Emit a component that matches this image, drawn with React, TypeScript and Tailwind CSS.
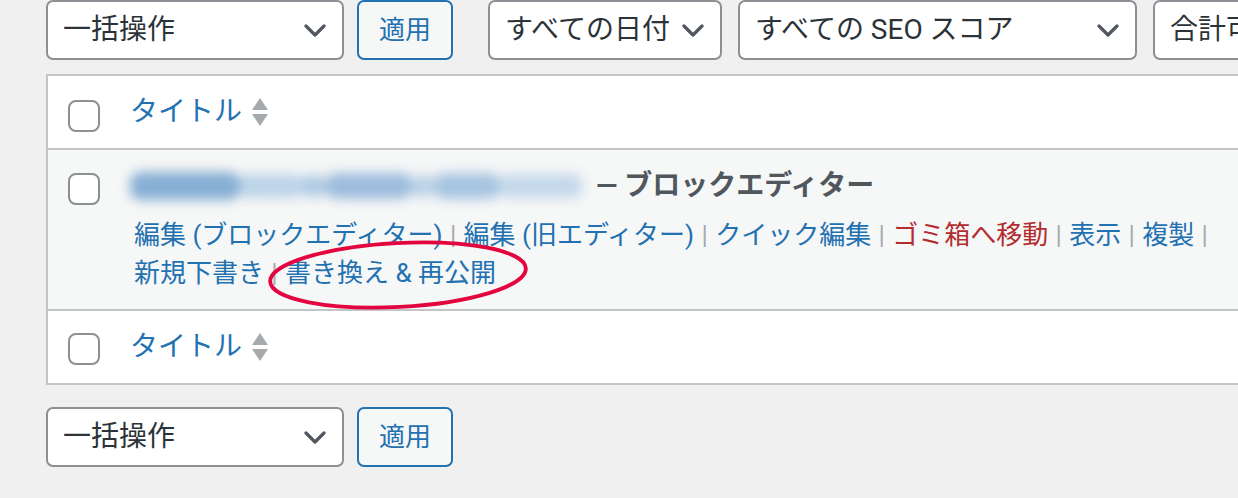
import React from "react";

const font = "font-['Roboto','Noto_Sans_CJK_JP',sans-serif]";

const Chevron = () => (
  <svg width="22" height="13" viewBox="0 0 22 13" className="shrink-0">
    <polyline
      points="2,2 11,11 20,2"
      fill="none"
      stroke="#50575e"
      strokeWidth="3.2"
      strokeLinecap="round"
      strokeLinejoin="round"
    />
  </svg>
);

const Select = ({ label, width }: { label: string; width: string }) => (
  <div
    className={`${width} h-[60px] shrink-0 flex items-center justify-between pl-[15px] pr-[16px] bg-white border-2 border-[#8c8f94] rounded-[7px] text-[28px] text-[#2c3338] whitespace-nowrap overflow-hidden`}
  >
    <span>{label}</span>
    <Chevron />
  </div>
);

const ApplyButton = () => (
  <div className="w-[96px] h-[60px] shrink-0 flex items-center justify-center bg-[#f6f7f7] border-2 border-[#2271b1] rounded-[7px] text-[26px] text-[#2271b1]">
    適用
  </div>
);

const Checkbox = ({ top }: { top: string }) => (
  <div
    className={`${top} ml-[20px] w-[32px] h-[32px] shrink-0 bg-white border-2 border-[#8c8f94] rounded-[8px]`}
  />
);

const SortArrows = () => (
  <svg width="18" height="30" viewBox="0 0 18 30" className="ml-[9px]">
    <polygon points="9,1 17,13 1,13" fill="#a7aaad" />
    <polygon points="1,17 17,17 9,29" fill="#a7aaad" />
  </svg>
);

const TitleHeader = ({ top }: { top: string }) => (
  <div className="h-[72px] bg-white flex items-start">
    <Checkbox top={top} />
    <div className="ml-[30px] mt-[16px] h-[40px] flex items-center text-[28px] text-[#2271b1]">
      <span>タイトル</span>
      <SortArrows />
    </div>
  </div>
);

const Sep = () => (
  <span className="inline-block w-[21px] text-center text-[#a7aaad]">|</span>
);

const Action = ({ children, red }: { children: React.ReactNode; red?: boolean }) => (
  <span className={red ? "text-[#b32d2e]" : "text-[#2271b1]"}>{children}</span>
);

// the post title is blurred out in the screenshot
const BlurredTitle = () => (
  <div className="flex items-center h-[36px] w-[452px] blur-[6px]">
    <div className="w-[110px] h-[28px] rounded-[10px] bg-[#86aed4]" />
    <div className="w-[60px] h-[24px] rounded-[8px] bg-[#bcd3e8]" />
    <div className="w-[26px] h-[22px] rounded-[8px] bg-[#b0cae3]" />
    <div className="w-[86px] h-[26px] rounded-[10px] bg-[#9cbcdc]" />
    <div className="w-[22px] h-[22px] rounded-[8px] bg-[#bad1e7]" />
    <div className="w-[66px] h-[26px] rounded-[10px] bg-[#a6c4e0]" />
    <div className="w-[82px] h-[24px] rounded-[8px] bg-[#c4d8eb]" />
  </div>
);

const PostRow = () => (
  <div className="relative h-[159px] bg-[#f6f7f7] flex items-start">
    <Checkbox top="mt-[23px]" />
    <div className="ml-[30px] pt-[16px] flex flex-col">
      <div className="h-[40px] flex items-center text-[28px]">
        <BlurredTitle />
        <span className="ml-[14px] font-bold text-[#50575e]">— ブロックエディター</span>
      </div>
      <div className="mt-[10px] ml-[4px] h-[38px] flex items-center text-[26px] whitespace-nowrap">
        <Action>編集 (ブロックエディター)</Action>
        <Sep />
        <Action>編集 (旧エディター)</Action>
        <Sep />
        <Action>クイック編集</Action>
        <Sep />
        <Action red>ゴミ箱へ移動</Action>
        <Sep />
        <Action>表示</Action>
        <Sep />
        <Action>複製</Action>
        <Sep />
      </div>
      <div className="ml-[4px] h-[38px] flex items-center text-[26px] whitespace-nowrap">
        <Action>新規下書き</Action>
        <Sep />
        <Action>書き換え &amp; 再公開</Action>
      </div>
    </div>
    <svg
      className="absolute left-[217px] top-[88px] pointer-events-none"
      width="266"
      height="74"
      viewBox="0 0 266 74"
    >
      <ellipse
        cx="133"
        cy="37"
        rx="128"
        ry="32"
        transform="rotate(-3 133 37)"
        fill="none"
        stroke="#e3053d"
        strokeWidth="3.8"
      />
    </svg>
  </div>
);

export default function App() {
  return (
    <div className={`${font} w-[1238px] h-[498px] overflow-hidden bg-[#f0f0f1] pl-[46px]`}>
      <div className="flex items-center h-[60px]">
        <Select label="一括操作" width="w-[298px]" />
        <div className="ml-[13px]">
          <ApplyButton />
        </div>
        <div className="ml-[35px] flex gap-[16px]">
          <Select label="すべての日付" width="w-[234px]" />
          <Select label="すべての SEO スコア" width="w-[399px]" />
          <Select label="合計可読性スコア" width="w-[300px]" />
        </div>
      </div>

      <div className="mt-[14px] w-[1300px] border-2 border-[#c3c4c7] bg-white">
        <TitleHeader top="mt-[24px]" />
        <div className="border-t-2 border-[#c3c4c7]">
          <PostRow />
        </div>
        <div className="border-t-2 border-[#c3c4c7]">
          <TitleHeader top="mt-[22px]" />
        </div>
      </div>

      <div className="mt-[22px] flex items-center h-[60px]">
        <Select label="一括操作" width="w-[298px]" />
        <div className="ml-[13px]">
          <ApplyButton />
        </div>
      </div>
    </div>
  );
}
